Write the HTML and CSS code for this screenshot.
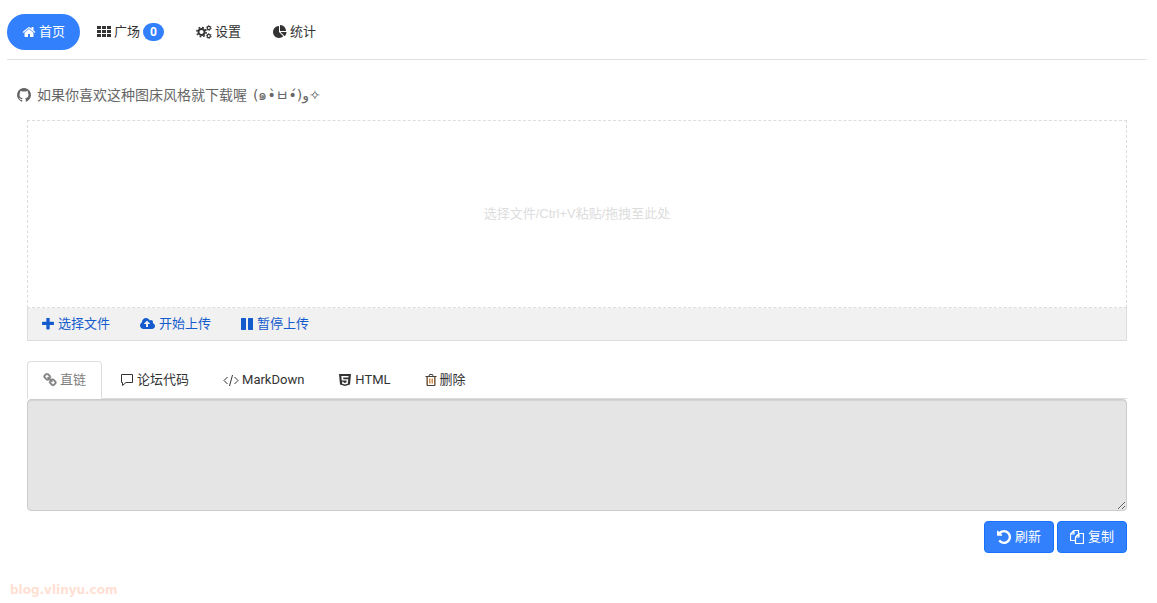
FILE: index.html
```html
<!DOCTYPE html>
<html lang="zh-CN">
<head>
  <meta charset="UTF-8">
  <meta name="viewport" content="width=device-width, initial-scale=1">
  <title>图床</title>
  <link rel="stylesheet" href="styles.css">
</head>
<body>
  <nav class="nav">
    <a class="nav-item active" href="#">
      <svg class="icon" viewBox="0 0 1792 1792"><path d="M1472 992v480q0 26-19 45t-45 19h-384v-384h-256v384h-384q-26 0-45-19t-19-45v-480q0-1 .5-3t.5-3l575-474 575 474q1 2 1 6zm223-69l-62 74q-8 9-21 11h-3q-13 0-21-7l-692-577-692 577q-12 8-24 7-13-2-21-11l-62-74q-8-10-7-23.5t11-21.5l719-599q32-26 76-26t76 26l244 204v-195q0-14 9-23t23-9h192q14 0 23 9t9 23v408l219 182q10 8 11 21.5t-7 23.5z"/></svg>
      首页
    </a>
    <a class="nav-item" href="#">
      <svg class="icon" viewBox="0 0 14 14"><path d="M0 1h4v3H0zM5 1h4v3H5zM10 1h4v3h-4zM0 5h4v3H0zM5 5h4v3H5zM10 5h4v3h-4zM0 9h4v3H0zM5 9h4v3H5zM10 9h4v3h-4z"/></svg>
      广场<span class="badge">0</span>
    </a>
    <a class="nav-item" href="#">
      <svg class="icon icon-wide" viewBox="0 0 16 14">
        <g fill="none" stroke="currentColor">
          <circle cx="5.5" cy="7" r="3" stroke-width="1.8"/>
          <circle cx="5.5" cy="7" r="4.6" stroke-width="1.6" stroke-dasharray="1.8 1.81"/>
          <circle cx="12.8" cy="3" r="1.6" stroke-width="1.2"/>
          <circle cx="12.8" cy="3" r="2.5" stroke-width=".8" stroke-dasharray="1.3 1.32"/>
          <circle cx="12.8" cy="11" r="1.6" stroke-width="1.2"/>
          <circle cx="12.8" cy="11" r="2.5" stroke-width=".8" stroke-dasharray="1.3 1.32"/>
        </g>
      </svg>
      设置
    </a>
    <a class="nav-item" href="#">
      <svg class="icon" viewBox="0 0 1792 1792"><path d="M768 890l546 546q-106 108-247.5 168t-298.5 60q-209 0-385.5-103t-279.5-279.5-103-385.5 103-385.5 279.5-279.5 385.5-103v762zm187 6h773q0 157-60 298.5t-168 247.5zm709-128h-768v-768q209 0 385.5 103t279.5 279.5 103 385.5z"/></svg>
      统计
    </a>
  </nav>

  <main class="content">
    <p class="notice">
      <svg class="icon icon-github" viewBox="128 128 1536 1536"><path d="M896 128q209 0 385.5 103t279.5 279.5 103 385.5q0 251-146.5 451.5t-378.5 277.5q-27 5-40-7t-13-30q0-3 .5-76.5t.5-134.5q0-97-52-142 57-6 102.5-18t94-39 81-66.5 53-105 20.5-150.5q0-119-79-206 37-91-8-204-28-9-81 11t-92 44l-38 24q-93-26-192-26t-192 26q-16-11-42.5-27t-83.5-38.5-85-13.5q-45 113-8 204-79 87-79 206 0 85 20.5 150t52.5 105 80.5 67 94 39 102.5 18q-39 36-49 103-21 10-45 15t-57 5-65.5-21.5-55.5-62.5q-19-32-48.5-52t-49.5-24l-20-3q-21 0-29 4.5t-5 11.5 9 14 13 12l7 5q22 10 43.5 38t31.5 51l10 23q13 38 44 61.5t67 30 69.5 7 55.5-3.5l23-4q0 38 .5 88.5t.5 54.5q0 18-13 30t-40 7q-232-77-378.5-277.5t-146.5-451.5q0-209 103-385.5t279.5-279.5 385.5-103z"/></svg>
      <span>如果你喜欢这种图床风格就下载喔</span>
      <span class="kaomoji">(๑•̀ㅂ•́)و✧</span>
    </p>

    <section class="uploader">
      <div class="dropzone">选择文件/Ctrl+V粘贴/拖拽至此处</div>
      <div class="toolbar">
        <button class="tool" type="button">
          <svg class="icon icon-small" viewBox="192 192 1408 1408"><path d="M1600 736v192q0 40-28 68t-68 28h-416v416q0 40-28 68t-68 28h-192q-40 0-68-28t-28-68v-416h-416q-40 0-68-28t-28-68v-192q0-40 28-68t68-28h416v-416q0-40 28-68t68-28h192q40 0 68 28t28 68v416h416q40 0 68 28t28 68z"/></svg>
          选择文件
        </button>
        <button class="tool" type="button">
          <svg class="icon icon-cloud" viewBox="-64 0 1920 1792"><path d="M1216 864q0-14-9-23l-352-352q-9-9-23-9t-23 9l-351 351q-10 12-10 24 0 14 9 23t23 9h224v352q0 13 9.5 22.5t22.5 9.5h192q13 0 22.5-9.5t9.5-22.5v-352h224q13 0 22.5-9.5t9.5-22.5zm640 288q0 159-112.5 271.5t-271.5 112.5h-1088q-185 0-316.5-131.5t-131.5-316.5q0-130 70-240t188-165q-2-30-2-43 0-212 150-362t362-150q156 0 285.5 87t188.5 231q71-62 166-62 106 0 181 75t75 181q0 76-41 138 130 31 213.5 135.5t83.5 238.5z"/></svg>
          开始上传
        </button>
        <button class="tool" type="button">
          <svg class="icon icon-small" viewBox="128 128 1536 1536"><path d="M1664 192v1408q0 26-19 45t-45 19h-512q-26 0-45-19t-19-45v-1408q0-26 19-45t45-19h512q26 0 45 19t19 45zm-896 0v1408q0 26-19 45t-45 19h-512q-26 0-45-19t-19-45v-1408q0-26 19-45t45-19h512q26 0 45 19t19 45z"/></svg>
          暂停上传
        </button>
      </div>
    </section>

    <section class="result">
      <div class="tabs">
        <a class="tab active" href="#">
          <svg class="icon icon-link" viewBox="0 0 1792 1792"><path d="M1520 1216q0-40-28-68l-208-208q-28-28-68-28-42 0-72 32 3 3 19 18.5t21.5 21.5 15 19 13 25.5 3.5 27.5q0 40-28 68t-68 28q-15 0-27.5-3.5t-25.5-13-19-15-21.5-21.5-18.5-19q-33 31-33 73 0 40 28 68l206 207q27 27 68 27 40 0 68-26l147-146q28-28 28-67zm-703-705q0-40-28-68l-206-207q-28-28-68-28-39 0-68 27l-147 146q-28 28-28 67 0 40 28 68l208 208q27 27 68 27 42 0 72-31-3-3-19-18.5t-21.5-21.5-15-19-13-25.5-3.5-27.5q0-40 28-68t68-28q15 0 27.5 3.5t25.5 13 19 15 21.5 21.5 18.5 19q33-31 33-73zm895 705q0 120-85 203l-147 146q-83 83-203 83-121 0-204-85l-206-207q-83-83-83-203 0-123 88-209l-88-88q-86 88-208 88-120 0-204-84l-208-208q-84-84-84-204t85-203l147-146q83-83 203-83 121 0 204 85l206 207q83 83 83 203 0 123-88 209l88 88q86-88 208-88 120 0 204 84l208 208q84 84 84 204z"/></svg>
          直链
        </a>
        <a class="tab" href="#">
          <svg class="icon" viewBox="0 0 14 14"><path d="M1.5 1.5h11v8H6L2.5 12.5V9.500h-1z" fill="none" stroke="currentColor" stroke-linejoin="round"/></svg>
          论坛代码
        </a>
        <a class="tab" href="#">
          <svg class="icon icon-wide" viewBox="0 0 16 14"><path d="M4.500 4L1 7.500 4.500 11M11.500 4L15 7.500 11.500 11M9.500 2l-3 11" fill="none" stroke="currentColor"/></svg>
          MarkDown
        </a>
        <a class="tab" href="#">
          <svg class="icon" viewBox="0 0 14 14"><path fill-rule="evenodd" d="M1 1h12l-1 10.500L7 13l-5-1.500zM3.300 3l.5 4.500h4.800l-.2 2L7 10l-1.400-.4-.1-.8H4l.2 2L7 11.600l2.800-.8.4-4.600H5.300L5.200 4.500h5.200l.2-1.500z"/></svg>
          HTML
        </a>
        <a class="tab" href="#">
          <svg class="icon icon-trash" viewBox="0 0 12 14" fill="none"><path d="M2.500 4v8.500h7V4M4.500 5.500v5M6 5.500v5M7.500 5.500v5" stroke="#cf8f4f"/><path d="M.5 3.500h11M4 3l.5-1.500h3L8 3M2 4v8.500h8V4" stroke="#4a4038"/></svg>
          删除
        </a>
      </div>
      <textarea class="output" aria-label="直链" readonly></textarea>
      <div class="actions">
        <button class="btn" type="button">
          <svg class="icon" viewBox="128 128 1536 1536"><path d="M1664 896q0 156-61 298t-164 245-245 164-298 61q-172 0-327-72.5t-264-204.5q-7-10-6.500-22.500t8.500-20.500l137-138q10-9 25-9 16 2 23 12 73 95 179 147t225 52q104 0 198.500-40.500t163.500-109.500 109.500-163.500 40.500-198.500-40.500-198.500-109.500-163.500-163.500-109.500-198.500-40.500q-98 0-188 35.500t-160 101.500l137 138q31 30 14 69-17 40-59 40h-448q-26 0-45-19t-19-45v-448q0-42 40-59 39-17 69 14l130 129q107-101 244.500-156.500t284.500-55.500q156 0 298 61t245 164 164 245 61 298z"/></svg>
          刷新
        </button>
        <button class="btn" type="button">
          <svg class="icon" viewBox="0 0 14 14"><path d="M5.500 10.500h-5V4L4 .5h4.500V3M4 .5V4H.5M9 3.500h4.500v10h-8V7zM9 3.500V7H5.500" fill="none" stroke="currentColor" stroke-width="1.200" stroke-linejoin="round"/></svg>
          复制
        </button>
      </div>
    </section>
  </main>

  <footer class="site">blog.vlinyu.com</footer>
</body>
</html>
```
FILE: styles.css
```css
* {
  box-sizing: border-box;
}
body {
  margin: 0;
  padding: 14px 10px 0 7px;
  background: #fff;
  color: #333;
  font-family: Roboto, "Noto Sans CJK SC", sans-serif;
  font-size: 13px;
  line-height: 20px;
}
a {
  color: inherit;
  text-decoration: none;
}
button {
  font: inherit;
  cursor: pointer;
}
.icon {
  width: 14px;
  height: 14px;
  flex: none;
  fill: currentColor;
}
.icon-wide {
  width: 16px;
}
.icon-cloud {
  width: 15px;
}
.icon-small {
  width: 12px;
  height: 12px;
}
.icon-trash {
  width: 12px;
  fill: none;
}
.icon-link {
  stroke: currentColor;
  stroke-width: 60;
}
.nav {
  display: flex;
  gap: 2px;
  padding-bottom: 9px;
  border-bottom: 1px solid #e1e1e1;
}
.nav-item {
  display: flex;
  align-items: center;
  gap: 3px;
  height: 36px;
  padding: 0 15px;
  border-radius: 18px;
}
.nav-item.active {
  background: #3280fc;
  color: #fff;
}
.badge {
  min-width: 21px;
  padding: 0 7px;
  border-radius: 9px;
  background: #3280fc;
  color: #fff;
  font-size: 12px;
  font-weight: bold;
  line-height: 18px;
  text-align: center;
}
.content {
  padding: 25px 20px 0;
}
.notice {
  display: flex;
  align-items: center;
  gap: 6px;
  height: 20px;
  margin: 0 0 15px -10px;
  color: #666;
  font-size: 14px;
}
.kaomoji {
  font-family: "DejaVu Sans", "Noto Sans CJK SC", sans-serif;
}
.dropzone {
  display: flex;
  align-items: center;
  justify-content: center;
  height: 188px;
  border: 1px dashed #ddd;
  color: #ddd;
  font-family: "Liberation Sans", "Noto Sans CJK SC", sans-serif;
}
.toolbar {
  display: flex;
  gap: 2px;
  height: 33px;
  border: 1px solid #ddd;
  border-top: 0;
  background: #f1f1f1;
}
.tool {
  display: flex;
  align-items: center;
  gap: 4px;
  padding: 0 14px;
  border: 0;
  background: none;
  color: #145ccd;
}
.result {
  margin-top: 20px;
}
.tabs {
  display: flex;
  gap: 2px;
  border-bottom: 1px solid #ddd;
}
.tab {
  display: flex;
  align-items: center;
  gap: 3px;
  height: 38px;
  margin-bottom: -1px;
  padding: 0 15px;
  border: 1px solid transparent;
  border-radius: 4px 4px 0 0;
}
.tab.active {
  border-color: #ddd;
  border-bottom-color: #fff;
  background: #fff;
  color: #808080;
}
.output {
  display: block;
  width: 100%;
  height: 112px;
  border: 1px solid #ccc;
  border-radius: 4px;
  outline: 0;
  background: #e5e5e5;
  box-shadow: inset 0 1px 1px rgba(0, 0, 0, 0.075);
  font: inherit;
  resize: vertical;
}
.actions {
  display: flex;
  justify-content: flex-end;
  gap: 3px;
  margin-top: 10px;
}
.btn {
  display: flex;
  align-items: center;
  gap: 4px;
  height: 32px;
  padding: 0 12px;
  border: 1px solid #1970fc;
  border-radius: 4px;
  background: #3280fc;
  color: #fff;
}
.site {
  margin-top: 27px;
  padding-left: 3px;
  color: #ffe0d3;
  font-family: "DejaVu Sans", sans-serif;
  font-size: 12px;
  font-weight: bold;
}
```
